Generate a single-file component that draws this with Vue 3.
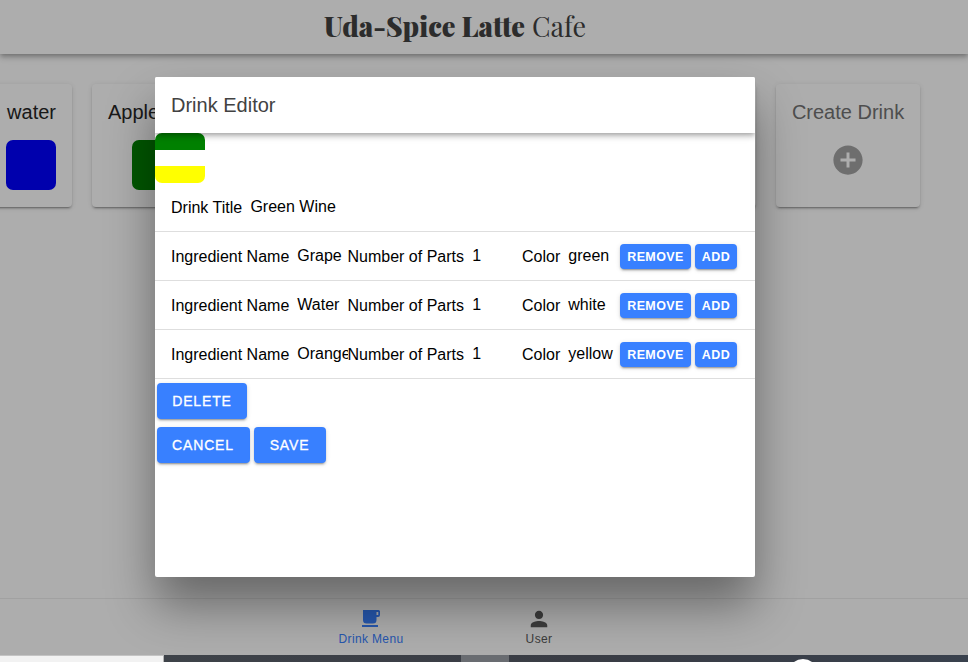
<script setup>
import { ref } from 'vue'

const title = ref('Green Wine')
const ingredients = ref([
  { name: 'Grape', parts: 1, color: 'green' },
  { name: 'Water', parts: 1, color: 'white' },
  { name: 'Orange', parts: 1, color: 'yellow' },
])
</script>

<template>
  <div class="screen">
    <div class="page">
      <header class="header">
        <svg class="brand" width="264" height="40" viewBox="0 0 264 40">
          <text x="1" y="24" class="brand-bold" textLength="201" lengthAdjust="spacingAndGlyphs">Uda-Spice Latte</text>
          <text x="209" y="24" class="brand-light" textLength="54" lengthAdjust="spacingAndGlyphs">Cafe</text>
        </svg>
      </header>
      <main class="drinks">
        <section class="card water">
          <h2>water</h2>
          <div class="swatch blue"></div>
        </section>
        <section class="card apple">
          <h2>Apple Juice</h2>
          <div class="swatch green"></div>
        </section>
        <section class="card filler"></section>
        <section class="card create">
          <h2>Create Drink</h2>
          <svg class="plus" width="36" height="36" viewBox="0 0 512 512">
            <path fill="currentColor" d="M256 48C141.1 48 48 141.1 48 256s93.1 208 208 208 208-93.1 208-208S370.9 48 256 48zm107 229H277v86h-42v-86h-86v-42h86v-86h42v86h86v42z" />
          </svg>
        </section>
      </main>
      <nav class="tabs">
        <a class="tab active">
          <svg width="22" height="22" viewBox="0 0 22 22">
            <path fill="currentColor" fill-rule="evenodd" d="M3 2H18.500Q20 2 20 3.500V7Q20 9 18 9H16.500V12Q16.500 15.500 13 15.500H6.500Q3 15.500 3 12zM16.500 4V7H18.300V4zM2 17H18V19H2z" />
          </svg>
          <span>Drink Menu</span>
        </a>
        <a class="tab">
          <svg width="22" height="22" viewBox="0 0 512 512">
            <path fill="currentColor" d="M256 256c52.8 0 96-43.2 96-96s-43.2-96-96-96-96 43.2-96 96 43.2 96 96 96zm0 48c-63.600 0-192 32.400-192 96v48h384v-48c0-63.600-128.400-96-192-96z" />
          </svg>
          <span>User</span>
        </a>
      </nav>
      <div class="backdrop">
        <div class="modal">
          <div class="toolbar">Drink Editor</div>
          <div class="content">
            <div class="preview">
              <div v-for="i in ingredients" :key="i.name" class="layer" :style="{ background: i.color, flexGrow: i.parts }"></div>
            </div>
            <div class="row title-row">
              <label>Drink Title</label><span class="value">{{ title }}</span>
            </div>
            <div v-for="i in ingredients" :key="i.name" class="row">
              <label class="w-name">Ingredient Name</label><span class="value v-name">{{ i.name }}</span>
              <label class="w-parts">Number of Parts</label><span class="value v-parts">{{ i.parts }}</span>
              <label class="w-color">Color</label><span class="value v-color">{{ i.color }}</span>
              <button class="small remove">REMOVE</button>
              <button class="small add">ADD</button>
            </div>
            <div class="actions"><button class="delete">DELETE</button></div>
            <div class="actions"><button class="cancel">CANCEL</button><button class="save">SAVE</button></div>
          </div>
        </div>
      </div>
    </div>
    <div class="taskbar">
      <div class="search"></div>
      <div class="task"></div>
      <div class="round"></div>
    </div>
  </div>
</template>

<style>
body { margin: 0; overflow: hidden; }
</style>

<style scoped>
* { box-sizing: border-box; }
.screen { width: 968px; height: 662px; overflow: hidden; font-family: "Liberation Sans", Arial, sans-serif; color: #000; }
.page { position: relative; height: 655px; display: flex; flex-direction: column; overflow: hidden; background: #fff; }
.header {
  height: 54px; flex: none; display: flex; align-items: center; padding-left: 323px;
  box-shadow: 0 2px 4px -1px rgba(0,0,0,.2), 0 4px 5px 0 rgba(0,0,0,.14), 0 1px 10px 0 rgba(0,0,0,.12);
}
.brand { margin-top: 12px; overflow: visible; fill: #424242; font-family: "Playfair Display", "Liberation Serif", serif; font-size: 28px; }
.brand-bold { font-weight: 900; }
.brand-light { font-weight: 400; }
.drinks { flex: 1; display: flex; align-items: flex-start; gap: 20px; margin-left: -10px; padding-top: 30px; }
.card {
  height: 123px; flex: none; padding: 16px; border-radius: 4px; display: flex; flex-direction: column; align-items: center;
  box-shadow: 0 3px 1px -2px rgba(0,0,0,.2), 0 2px 2px 0 rgba(0,0,0,.14), 0 1px 5px 0 rgba(0,0,0,.12);
}
.card h2 { margin: 0; font-size: 20px; font-weight: 400; line-height: 24px; white-space: nowrap; color: #262626; }
.water { width: 82px; }
.water h2 { align-self: flex-end; }
.apple { width: 130px; }
.apple h2 { align-self: flex-start; }
.filler { width: 514px; }
.create { width: 144px; }
.create h2 { color: #737373; }
.swatch { width: 50px; height: 50px; margin-top: 16px; border-radius: 7px; }
.blue { background: #00f; }
.green { background: #008000; }
.plus { margin-top: 18px; color: #a3a3a3; }
.tabs { height: 57px; flex: none; display: flex; justify-content: center; border-top: 1px solid rgba(0,0,0,.07); width: 1026px; margin-left: -58px; }
.tab { width: 168px; display: flex; flex-direction: column; align-items: center; color: #595959; font-size: 12px; letter-spacing: .36px; line-height: 14px; padding-top: 9px; }
.tab span { margin-top: 2px; }
.tab.active { color: #3880ff; }
.backdrop { position: absolute; inset: 0; padding: 77px 0 0 155px; background: rgba(0,0,0,.32); }
.modal { width: 600px; height: 500px; border-radius: 2px; overflow: hidden; background: #fff; box-shadow: 0 28px 48px rgba(0,0,0,.4); }
.toolbar {
  position: relative; height: 56px; padding-left: 16px; font-size: 20px; line-height: 56px; color: #424242; background: #fff;
  box-shadow: 0 2px 4px -1px rgba(0,0,0,.2), 0 4px 5px 0 rgba(0,0,0,.14), 0 1px 10px 0 rgba(0,0,0,.12);
}
.preview { width: 50px; height: 50px; border-radius: 7px; overflow: hidden; display: flex; flex-direction: column; }
.layer { flex-basis: 0; }
.row { height: 49px; padding: 0 16px; display: flex; align-items: center; border-bottom: 1px solid #dedede; font-size: 16px; white-space: nowrap; }
.row label { line-height: 20px; padding-top: 1px; flex: none; }
.value { padding-left: 8.3px; overflow: hidden; line-height: 20px; flex: none; }
.w-name { width: 118px; }
.v-name { width: 58.500px; }
.w-parts { width: 116.500px; }
.v-parts { width: 58px; }
.w-color { width: 38px; }
.v-color { width: 60px; }
button {
  border: 0; padding: 0; margin: 4px 2px; height: 36px; border-radius: 4px; background: #3880ff; color: #fff;
  font-family: "Liberation Sans", Arial, sans-serif; font-size: 14px; font-weight: 500; letter-spacing: .84px; -webkit-text-stroke: .3px #fff;
  box-shadow: 0 3px 1px -2px rgba(0,0,0,.2), 0 2px 2px 0 rgba(0,0,0,.14), 0 1px 5px 0 rgba(0,0,0,.12);
}
.actions { height: 44px; display: flex; }
.small { height: 25px; flex: none; font-size: 12.500px; font-weight: 700; letter-spacing: .4px; margin: 0 4px 0 0; padding-top: 1px; -webkit-text-stroke: 0; }
.remove { width: 71px; }
.add { width: 42px; }
.delete { width: 90px; }
.cancel { width: 93px; padding-right: 1px; }
.save { width: 72px; padding-right: 1px; }
.taskbar { height: 7px; position: relative; display: flex; background: linear-gradient(90deg, #40454b, #393c44 60%, #39414d); }
.search { width: 164px; height: 7px; background: #f2f2f2; border-top: 1px solid #c4c4c4; border-right: 1px solid #b5b5b5; }
.task { width: 48px; margin-left: 297px; background: #696c71; }
.round { position: absolute; left: 788px; top: 4px; width: 30px; height: 30px; border-radius: 50%; background: #fff; }
</style>
